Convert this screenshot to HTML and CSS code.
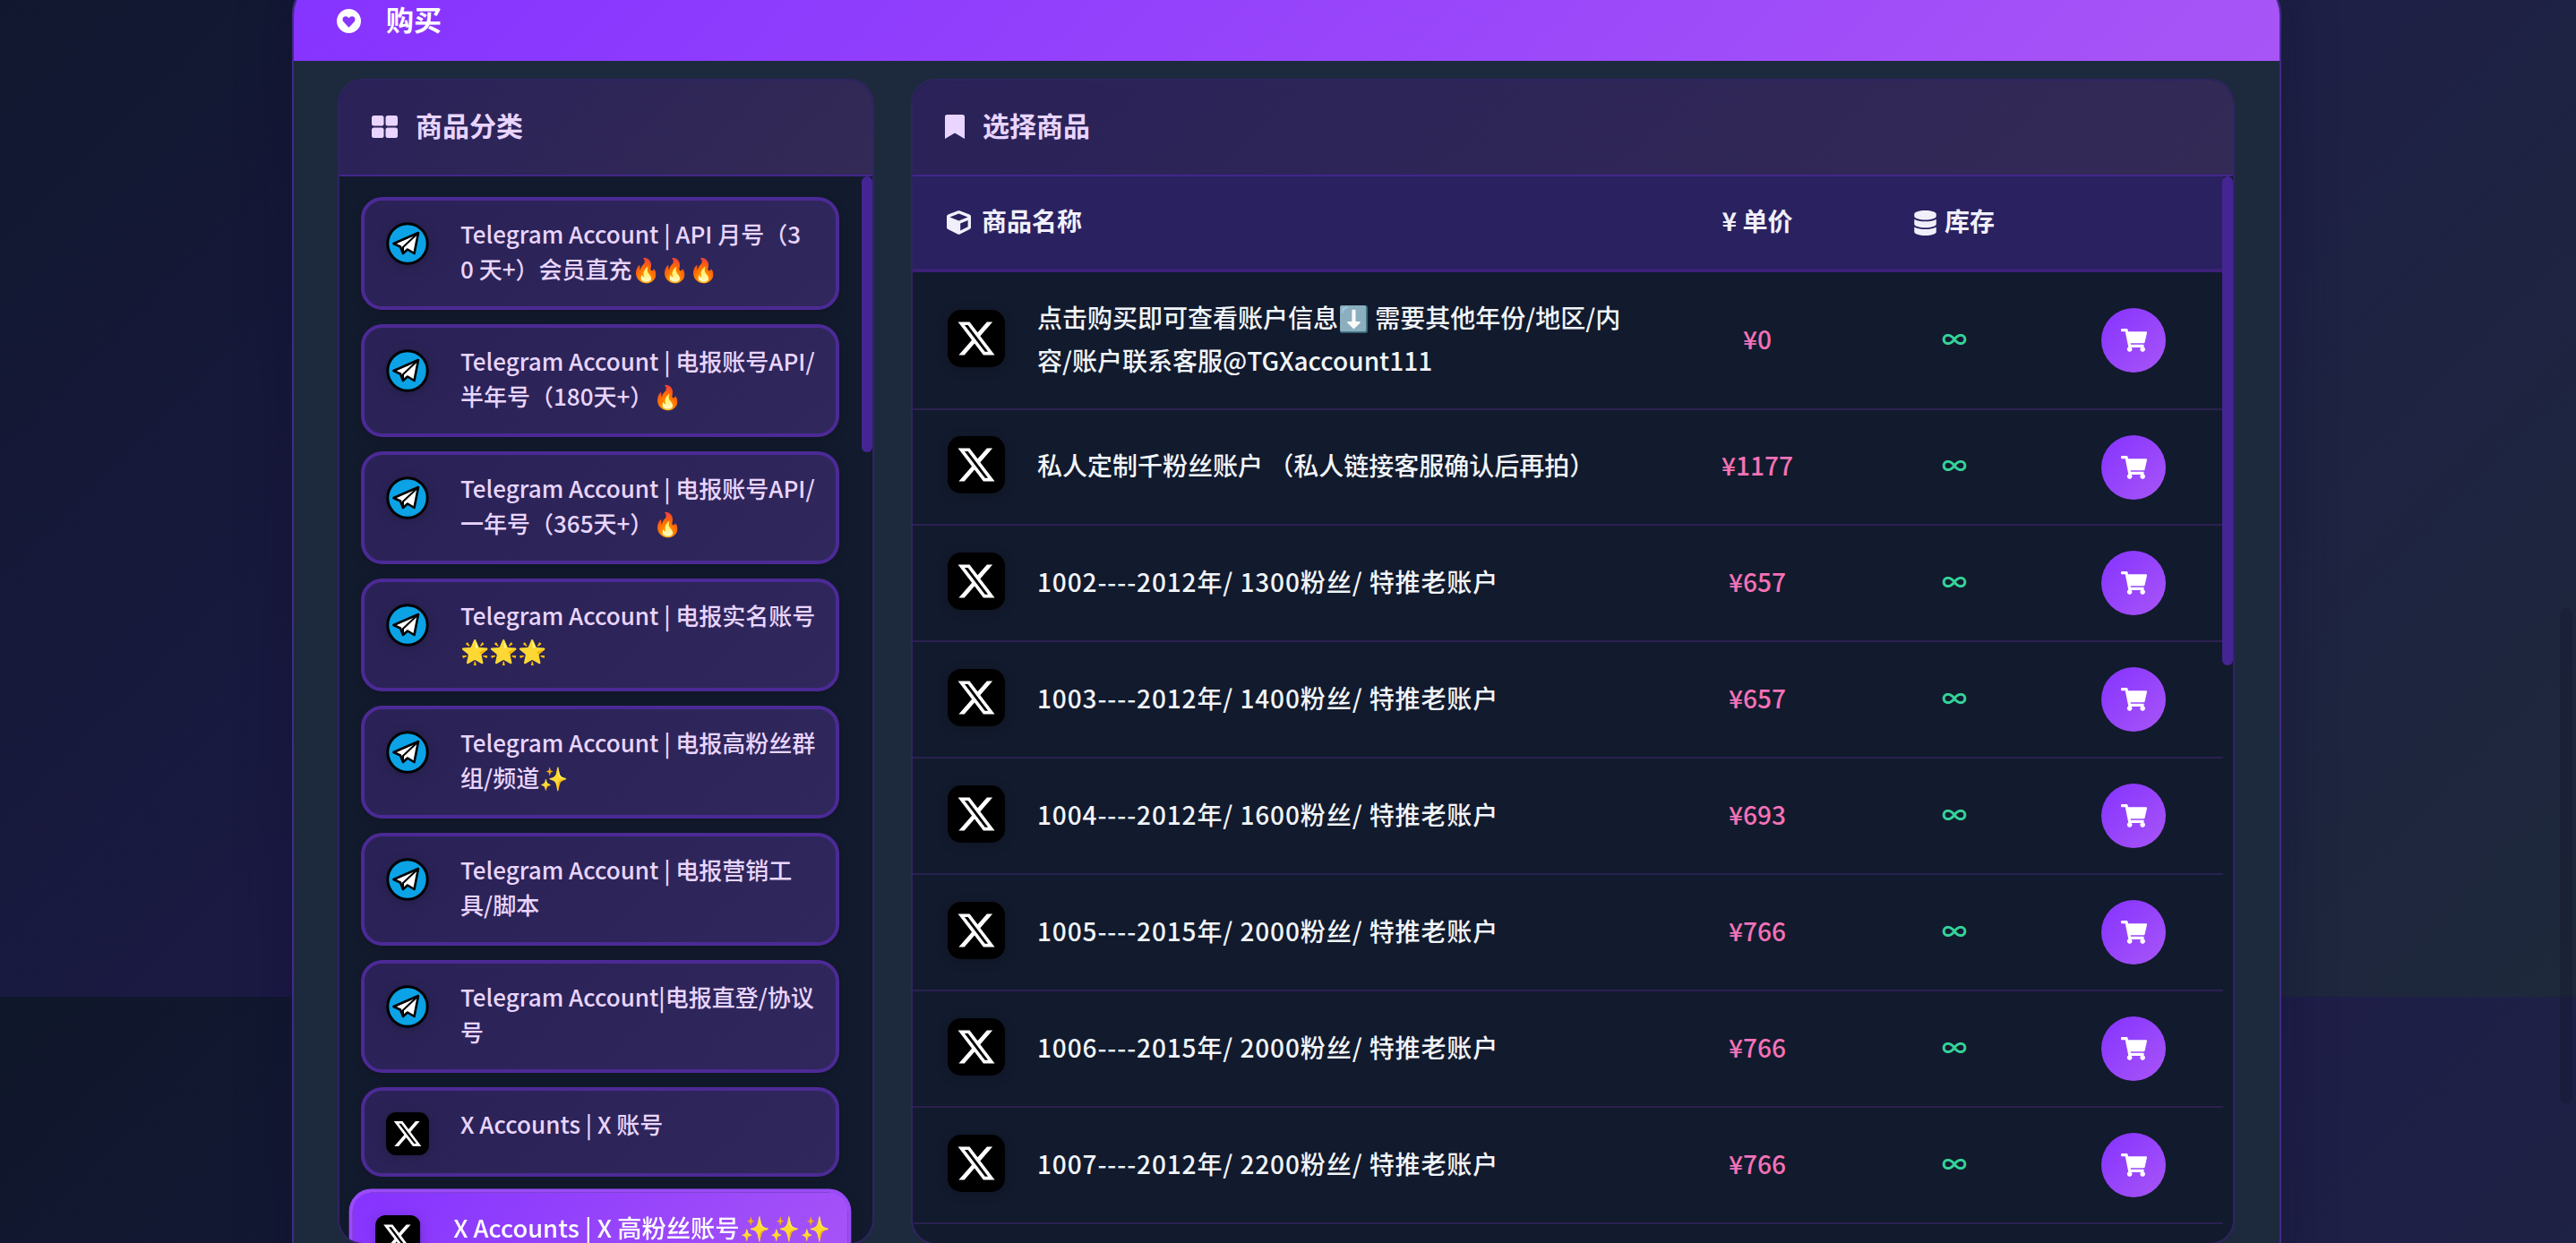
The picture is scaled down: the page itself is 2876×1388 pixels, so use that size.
FILE: index.html
```html
<!DOCTYPE html>
<html lang="zh-CN">
<head>
    <meta charset="UTF-8">
    <title>购买</title>
    <link rel="stylesheet" href="styles.css">
</head>
<body>
    <svg class="defs" width="0" height="0">
        <symbol id="x-logo" viewBox="0 0 64 64">
            <rect width="64" height="64" rx="15" fill="#000"/>
            <g transform="translate(9.2 9.2) scale(1.9)">
                <path fill="#fff" d="M18.244 2.25h3.308l-7.227 8.26 8.502 11.24H16.17l-5.214-6.817L4.99 21.75H1.68l7.73-8.835L1.254 2.25H8.08l4.713 6.231zm-1.161 17.52h1.833L7.084 4.126H5.117z"/>
            </g>
        </symbol>
        <symbol id="tg-logo" viewBox="0 0 48 48">
            <circle cx="24" cy="24" r="22.2" fill="#0ba2e6" stroke="#000" stroke-width="3"/>
            <path fill="#fff" stroke="#000" stroke-width="2.6" stroke-linejoin="round" d="M36 12 L8.5 24 L16 27.5 L19 35 L24 30.5 L31.5 35 Z"/>
            <path fill="none" stroke="#000" stroke-width="2" d="M36 12 L19 28 L19 34"/>
        </symbol>
        <symbol id="cart" viewBox="0 0 576 512">
            <path fill="#fff" d="M528.12 301.319l47.273-208C578.806 78.301 567.391 64 551.99 64H159.208l-9.166-44.81C147.758 8.021 137.93 0 126.529 0H24C10.745 0 0 10.745 0 24v16c0 13.255 10.745 24 24 24h69.883l70.248 343.435C147.325 417.1 136 435.222 136 456c0 30.928 25.072 56 56 56s56-25.072 56-56c0-15.674-6.447-29.835-16.824-40h209.647C430.447 426.165 424 440.326 424 456c0 30.928 25.072 56 56 56s56-25.072 56-56c0-22.172-12.888-41.332-31.579-50.405l5.517-24.276c3.413-15.018-8.002-29.319-23.403-29.319H218.117l-6.545-32h293.145c11.206 0 20.92-7.754 23.403-18.681z"/>
        </symbol>
    </svg>

    <div class="buy-card">
        <header class="buy-head">
            <svg class="icon-heart" viewBox="0 0 24 24"><path fill="#fff" fill-rule="evenodd" d="M12 0a12 12 0 1 0 0 24A12 12 0 0 0 12 0z M12 18.5 L6.6 12.6 C4.9 10.6 6 7.6 8.6 7.4 C10 7.3 11.3 8 12 9.3 C12.7 8 14 7.3 15.4 7.4 C18 7.6 19.1 10.6 17.4 12.6 Z"/></svg>
            <span class="label">购买</span>
        </header>

        <div class="buy-body">
            <section class="panel">
                <div class="panel-head">
                    <svg class="icon-grid" viewBox="0 0 29 25"><g fill="#e9d5ff"><rect width="13.5" height="11.5" rx="2.5"/><rect x="15.5" width="13.5" height="11.5" rx="2.5"/><rect y="13.5" width="13.5" height="11.5" rx="2.5"/><rect x="15.5" y="13.5" width="13.5" height="11.5" rx="2.5"/></g></svg>
                    <h2>商品分类</h2>
                </div>
                <div class="cat-list">
                    <a class="cat"><svg class="cat-icon"><use href="#tg-logo"/></svg><span>Telegram Account | API 月号（3<br>0 天+）会员直充🔥🔥🔥</span></a>
                    <a class="cat"><svg class="cat-icon"><use href="#tg-logo"/></svg><span>Telegram Account | 电报账号API/<br>半年号（180天+）🔥</span></a>
                    <a class="cat"><svg class="cat-icon"><use href="#tg-logo"/></svg><span>Telegram Account | 电报账号API/<br>一年号（365天+）🔥</span></a>
                    <a class="cat"><svg class="cat-icon"><use href="#tg-logo"/></svg><span>Telegram Account | 电报实名账号<br>🌟🌟🌟</span></a>
                    <a class="cat"><svg class="cat-icon"><use href="#tg-logo"/></svg><span>Telegram Account | 电报高粉丝群<br>组/频道✨</span></a>
                    <a class="cat"><svg class="cat-icon"><use href="#tg-logo"/></svg><span>Telegram Account | 电报营销工<br>具/脚本</span></a>
                    <a class="cat"><svg class="cat-icon"><use href="#tg-logo"/></svg><span>Telegram Account|电报直登/协议<br>号</span></a>
                    <a class="cat"><svg class="cat-icon"><use href="#x-logo"/></svg><span>X Accounts | X 账号</span></a>
                    <a class="cat active"><svg class="cat-icon"><use href="#x-logo"/></svg><span>X Accounts | X 高粉丝账号✨✨✨</span></a>
                </div>
                <div class="scroll-thumb cat-thumb"></div>
            </section>

            <section class="panel">
                <div class="panel-head">
                    <svg class="icon-bookmark" viewBox="0 0 22 27"><path fill="#e9d5ff" d="M2.5 0h17A2.5 2.5 0 0 1 22 2.5V27L11 20.5 0 27V2.5A2.5 2.5 0 0 1 2.5 0z"/></svg>
                    <h2>选择商品</h2>
                </div>
                <div class="goods">
                    <div class="goods-head">
                        <div class="col-name"><svg class="icon-cube" viewBox="0 0 512 512"><path fill="#f1f0fa" d="M239.1 6.3l-208 78c-18.7 7-31.1 25-31.1 45v225.1c0 18.2 10.3 34.8 26.5 42.9l208 104c13.5 6.8 29.4 6.8 42.9 0l208-104c16.3-8.1 26.5-24.8 26.5-42.9V129.3c0-20-12.4-37.9-31.1-44.9l-208-78C262 2.2 250 2.2 239.1 6.3zM256 68.4l192 72v1.1l-192 78-192-78v-1.1l192-72zm32 356V275.5l160-65v133.9l-160 80z"/></svg><span class="label">商品名称</span></div>
                        <div class="col-mid"><span class="label">¥ 单价</span></div>
                        <div class="col-mid"><svg class="icon-db" viewBox="0 0 448 512"><path fill="#f1f0fa" d="M448 73.143v45.714C448 159.143 347.667 192 224 192S0 159.143 0 118.857V73.143C0 32.857 100.333 0 224 0s224 32.857 224 73.143zM448 176v102.857C448 319.143 347.667 352 224 352S0 319.143 0 278.857V176c48.125 33.143 136.208 48.572 224 48.572S399.874 209.143 448 176zm0 160v102.857C448 479.143 347.667 512 224 512S0 479.143 0 438.857V336c48.125 33.143 136.208 48.572 224 48.572S399.874 369.143 448 336z"/></svg><span class="label">库存</span></div>
                        <div></div>
                    </div>

                    <div class="row row-tall">
                        <div class="col-name"><svg class="goods-icon"><use href="#x-logo"/></svg><span class="label">点击购买即可查看账户信息⬇️ 需要其他年份/地区/内<br>容/账户联系客服@TGXaccount111</span></div>
                        <div class="price">¥0</div><div class="stock">∞</div>
                        <div class="col-btn"><button class="buy-btn"><svg><use href="#cart"/></svg></button></div>
                    </div>
                    <div class="row">
                        <div class="col-name"><svg class="goods-icon"><use href="#x-logo"/></svg><span class="label">私人定制千粉丝账户 （私人链接客服确认后再拍）</span></div>
                        <div class="price">¥1177</div><div class="stock">∞</div>
                        <div class="col-btn"><button class="buy-btn"><svg><use href="#cart"/></svg></button></div>
                    </div>
                    <div class="row">
                        <div class="col-name"><svg class="goods-icon"><use href="#x-logo"/></svg><span class="label code">1002----2012年/ 1300粉丝/ 特推老账户</span></div>
                        <div class="price">¥657</div><div class="stock">∞</div>
                        <div class="col-btn"><button class="buy-btn"><svg><use href="#cart"/></svg></button></div>
                    </div>
                    <div class="row">
                        <div class="col-name"><svg class="goods-icon"><use href="#x-logo"/></svg><span class="label code">1003----2012年/ 1400粉丝/ 特推老账户</span></div>
                        <div class="price">¥657</div><div class="stock">∞</div>
                        <div class="col-btn"><button class="buy-btn"><svg><use href="#cart"/></svg></button></div>
                    </div>
                    <div class="row">
                        <div class="col-name"><svg class="goods-icon"><use href="#x-logo"/></svg><span class="label code">1004----2012年/ 1600粉丝/ 特推老账户</span></div>
                        <div class="price">¥693</div><div class="stock">∞</div>
                        <div class="col-btn"><button class="buy-btn"><svg><use href="#cart"/></svg></button></div>
                    </div>
                    <div class="row">
                        <div class="col-name"><svg class="goods-icon"><use href="#x-logo"/></svg><span class="label code">1005----2015年/ 2000粉丝/ 特推老账户</span></div>
                        <div class="price">¥766</div><div class="stock">∞</div>
                        <div class="col-btn"><button class="buy-btn"><svg><use href="#cart"/></svg></button></div>
                    </div>
                    <div class="row">
                        <div class="col-name"><svg class="goods-icon"><use href="#x-logo"/></svg><span class="label code">1006----2015年/ 2000粉丝/ 特推老账户</span></div>
                        <div class="price">¥766</div><div class="stock">∞</div>
                        <div class="col-btn"><button class="buy-btn"><svg><use href="#cart"/></svg></button></div>
                    </div>
                    <div class="row">
                        <div class="col-name"><svg class="goods-icon"><use href="#x-logo"/></svg><span class="label code">1007----2012年/ 2200粉丝/ 特推老账户</span></div>
                        <div class="price">¥766</div><div class="stock">∞</div>
                        <div class="col-btn"><button class="buy-btn"><svg><use href="#cart"/></svg></button></div>
                    </div>
                </div>
                <div class="scroll-thumb goods-thumb"></div>
            </section>
        </div>
    </div>

    <div class="page-thumb"></div>
</body>
</html>
```

FILE: styles.css
```css
* {
    box-sizing: border-box;
}

html, body {
    height: 1388px;
    overflow: hidden;
}

body {
    margin: 0;
    position: relative;
    font-family: 'Noto Sans CJK SC', 'Noto Sans', sans-serif;
    background: linear-gradient(135deg, #0f172a 0%, #1e1b4b 50%, #1e293b 100%);
    background-size: 100% 1388px;
    background-position: 0 -275px;
}

.defs {
    position: absolute;
}

/* the font sits low in its line box, this pulls labels up next to their icons */
.label {
    margin-top: -5px;
}

.buy-card {
    width: 2221px;
    height: 1480px;
    margin: -24px 0 0 326px;
    background: #1d2a3d;
    border: 2px solid #3f2b85;
    border-radius: 40px;
    box-shadow: 0 0 60px rgba(15, 10, 45, 0.35);
    overflow: hidden;
}

.buy-head {
    display: flex;
    align-items: center;
    gap: 28px;
    height: 90px;
    padding: 0 0 0 48px;
    background: linear-gradient(135deg, #8533ff, #a855f7);
    color: #fff;
    font-size: 31px;
    font-weight: 700;
}

.icon-heart {
    width: 27px;
    height: 27px;
}

.buy-body {
    display: grid;
    grid-template-columns: 599px 1478px;
    gap: 41px;
    padding: 20px 49px 0;
    height: 1322px;
}

.panel {
    position: relative;
    display: flex;
    flex-direction: column;
    background: #121a2d;
    border: 2px solid #2f2462;
    border-radius: 28px;
    overflow: hidden;
}

.panel-head {
    display: flex;
    align-items: center;
    gap: 20px;
    flex: none;
    height: 107px;
    padding: 0 0 2px 36px;
    background: linear-gradient(135deg, #2a2258, #332a56);
    border-bottom: 2px solid #42268c;
}

.panel-head h2 {
    margin: -5px 0 0;
    color: #e9d5ff;
    font-size: 30px;
    font-weight: 700;
}

.icon-grid {
    width: 29px;
    height: 25px;
}

.icon-bookmark {
    width: 22px;
    height: 27px;
}

/* category list on the left */
.cat-list {
    display: flex;
    flex-direction: column;
    gap: 16px;
    padding: 23px 0 0 24px;
}

.cat {
    display: flex;
    gap: 35px;
    width: 534px;
    padding: 20px 20px 20px 24px;
    background: linear-gradient(135deg, #2a2256, #30285c);
    border: 4px solid #4c2a96;
    border-radius: 24px;
    box-shadow: 0 4px 12px rgba(0, 0, 0, 0.15);
    color: #e9d5ff;
    font-size: 26px;
    font-weight: 500;
    line-height: 39px;
    white-space: nowrap;
}

.cat span {
    margin: -3px 0 3px;
}

.cat.active {
    background: linear-gradient(135deg, #8533ff, #a855f7);
    border-color: #9a4cf6;
    color: #fff;
    transform: scale(1.05);
}

.cat-icon {
    flex: none;
    width: 48px;
    height: 48px;
    margin-top: 4px;
    filter: drop-shadow(0 2px 6px rgba(0, 0, 0, 0.2));
}

.scroll-thumb {
    position: absolute;
    right: 0;
    top: 107px;
    width: 12px;
    background: #452594;
    border-radius: 6px;
}

.cat-thumb {
    height: 308px;
}

.goods-thumb {
    height: 546px;
}

.page-thumb {
    position: absolute;
    left: 2858px;
    top: 679px;
    width: 14px;
    height: 553px;
    background: rgba(20, 20, 40, 0.3);
    border-radius: 7px;
}

/* goods table on the right */
.goods {
    width: 1463px;
}

.goods-head,
.row {
    display: grid;
    grid-template-columns: 833px 220px 220px 190px;
    align-items: center;
}

.goods-head {
    height: 107px;
    background: #2a2160;
    border-bottom: 4px solid #3b2177;
    color: #f1f0fa;
    font-size: 28px;
    font-weight: 700;
}

.goods-head .col-name {
    gap: 12px;
    padding-left: 38px;
}

.goods-head .col-mid {
    display: flex;
    justify-content: center;
    align-items: center;
    gap: 9px;
}

.icon-cube {
    width: 27px;
    height: 27px;
}

.icon-db {
    width: 25px;
    height: 28px;
}

.row {
    height: 130px;
    border-bottom: 2px solid #2a2150;
    color: #f1f5f9;
    font-size: 28px;
    font-weight: 500;
}

.row-tall {
    height: 154px;
}

.row-tall + .row {
    height: 129px;
}

.col-name {
    display: flex;
    align-items: center;
    line-height: 48px;
}

.row .col-name {
    gap: 36px;
    padding-left: 39px;
}

.code {
    letter-spacing: 0.9px;
}

.goods-icon {
    flex: none;
    width: 64px;
    height: 64px;
    margin-top: -5px;
    filter: drop-shadow(0 2px 6px rgba(0, 0, 0, 0.2));
}

.price {
    padding-bottom: 5px;
    color: #f472b6;
    text-align: center;
}

.stock {
    padding-bottom: 5px;
    color: #34d399;
    font-weight: 700;
    text-align: center;
}

.col-btn {
    display: flex;
    justify-content: center;
    padding-right: 10px;
}

.buy-btn {
    display: flex;
    align-items: center;
    justify-content: center;
    width: 72px;
    height: 72px;
    padding: 0;
    background: linear-gradient(135deg, #8533ff, #a855f7);
    border: none;
    border-radius: 50%;
    cursor: pointer;
}

.buy-btn svg {
    width: 29px;
    height: 26px;
}
```
